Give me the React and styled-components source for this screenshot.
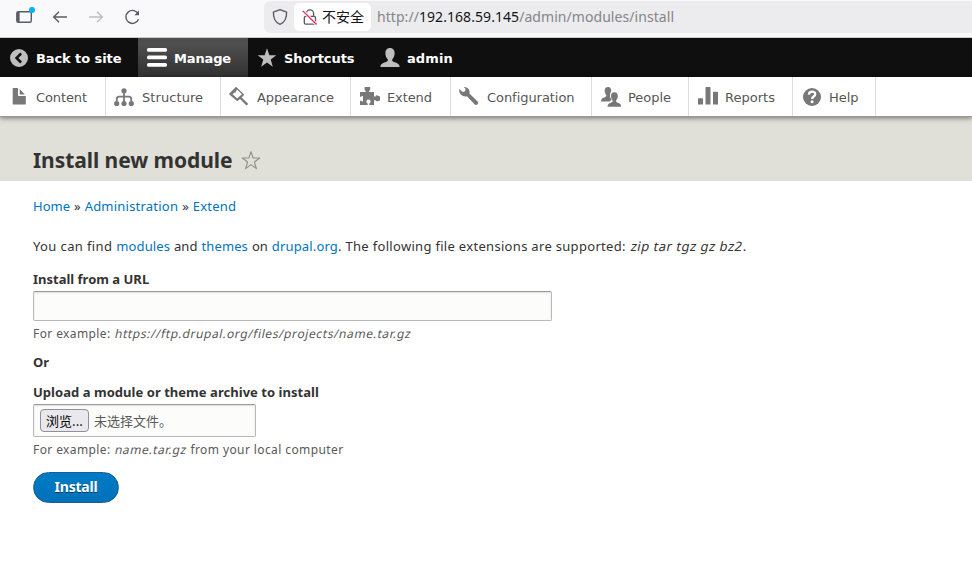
import React from 'react';
import styled, { createGlobalStyle, css } from 'styled-components';

const GlobalStyle = createGlobalStyle`
  * {
    box-sizing: border-box;
  }

  body {
    margin: 0;
    background: #fff;
    color: #333;
    font: 13px/20px 'Noto Sans', 'Open Sans', sans-serif;
  }

  svg {
    display: block;
    flex: none;
  }
`;

const tracking = css`
  letter-spacing: ${props => props.$tracking || 0}px;
`;

const BrowserBar = styled.div`
  height: 38px;
  display: flex;
  align-items: flex-start;
  background: #f9f9fb;
  border-bottom: 1px solid #ccccce;
`;

const BrowserButtons = styled.div`
  width: 264px;
  padding: 7px 0 0 15px;
  display: flex;
  gap: 16px;
`;

const AddressBar = styled.div`
  flex: 1;
  height: 32px;
  margin-top: 1px;
  padding-left: 6px;
  display: flex;
  align-items: center;
  background: #ececee;
  border-radius: 6px 0 0 6px;
`;

const SecurityChip = styled.div`
  width: 77px;
  height: 28px;
  margin: 0 6px 0 4px;
  padding: 0 0 2px 7px;
  display: flex;
  align-items: center;
  gap: 3px;
  background: #fff;
  border-radius: 5px;
  color: #15141a;
  font: 14px/26px 'Noto Sans CJK SC', sans-serif;
  white-space: nowrap;

  & > svg {
    margin-top: 2px;
  }
`;

const Url = styled.div`
  color: #85858a;
  font: 14px/28px 'Noto Sans', sans-serif;
  letter-spacing: 0.06px;

  & > b {
    color: #15141a;
    font-weight: 400;
  }
`;

const Toolbar = styled.nav`
  height: 39px;
  display: flex;
  background: #0f0f0f;
`;

const ToolbarTab = styled.a`
  width: ${props => props.$width}px;
  padding-left: 9px;
  display: flex;
  gap: 7px;
  color: #fff;
  font: 700 13px/42px 'DejaVu Sans', sans-serif;
  white-space: nowrap;
  background: ${props =>
    props.$active ? 'linear-gradient(#4e4e4e 20%, #303030)' : 'none'};
  ${tracking}

  & > svg {
    margin-top: 10px;
    fill: ${props => (props.$active ? '#fff' : '#bebebe')};
  }
`;

const Tray = styled.nav`
  height: 39px;
  display: flex;
  position: relative;
  background: #fff;
  box-shadow: 0 1px 0 #999b96, 0 2px 5px rgba(0, 0, 0, 0.5);
`;

const TrayLink = styled.a`
  width: ${props => props.$width}px;
  padding-left: ${props => props.$inset || 8}px;
  display: flex;
  gap: ${props => (props.$inset ? 7 : 8)}px;
  border-right: 1px solid #ddd;
  color: #565656;
  font: 13px/42px 'DejaVu Sans', sans-serif;
  white-space: nowrap;
  ${tracking}

  & > svg {
    margin-top: 10px;
    fill: #787878;
  }
`;

const PageHeader = styled.header`
  height: 65px;
  padding: 30px 0 0 33px;
  display: flex;
  gap: 9px;
  background: #e0e0d8;

  & > svg {
    margin-top: 4px;
  }
`;

const Title = styled.h1`
  margin: 0;
  font-size: 21px;
  line-height: 28px;
  letter-spacing: -0.06px;
`;

const Content = styled.main`
  padding: 15px 33px 0;
  white-space: nowrap;
`;

const Breadcrumb = styled.nav`
  display: flex;
  gap: 4px;
  margin-bottom: 20px;
`;

const Link = styled.a`
  color: #0074bd;
  ${tracking}
`;

const Span = styled.span`
  ${tracking}
`;

/* Slanted roman instead of the narrower true italic */
const Em = styled.em`
  display: inline-block;
  margin-left: 1px;
  font-style: normal;
  transform: skewX(-12deg);
  ${tracking}
`;

const Intro = styled.p`
  margin: 0 0 13px;
  display: flex;
  gap: 4px;
`;

const Label = styled.label`
  display: block;
  margin-bottom: 2px;
  font-weight: 700;
  ${tracking}
`;

const field = css`
  border: 1px solid #b8b8b8;
  border-top-color: #999;
  border-radius: 2px;
  background: #fcfcfa;
  box-shadow: inset 0 1px 2px rgba(0, 0, 0, 0.125);
`;

const TextInput = styled.input`
  ${field}
  display: block;
  width: 519px;
  height: 30px;
`;

const FileField = styled.div`
  ${field}
  width: 223px;
  height: 33px;
  padding-left: 6px;
  display: flex;
  align-items: center;
  gap: 5px;
  color: #595959;
  font: 13px/20px 'Noto Sans CJK SC', sans-serif;
`;

const BrowseButton = styled.button`
  width: 49px;
  height: 23px;
  padding: 0;
  border: 1px solid #8f8f9d;
  border-radius: 4px;
  background: #e9e9ed;
  color: #000;
  font: 13px/20px 'Noto Sans CJK SC', sans-serif;
`;

const Description = styled.div`
  margin: 3px 0 ${props => props.$gap}px;
  color: #595959;
  font-size: 12px;
  letter-spacing: 0.4px;
`;

const Or = styled.div`
  margin-bottom: 10px;
  font-weight: 700;
`;

const SubmitButton = styled.button`
  display: block;
  width: 86px;
  height: 31px;
  padding: 0 0 1px;
  border: 1px solid #1e5c90;
  border-radius: 16px;
  background: linear-gradient(#007bc6, #0071b8);
  color: #fff;
  font: 700 14px/20px 'Noto Sans', sans-serif;
  letter-spacing: -0.2px;
  text-shadow: 0 1px rgba(0, 0, 0, 0.5);
`;

const Icon = ({ children, size = 20, ...rest }) => (
  <svg width={size} height={size} viewBox="0 0 20 20" {...rest}>
    {children}
  </svg>
);

const icons = {
  back: (
    <path
      fillRule="evenodd"
      d="M10 1a9 9 0 1 0 0 18a9 9 0 0 0 0-18zM11.2 4.6L13 6.4L9.3 10L13 13.6L11.2 15.4L5.8 10z"
    />
  ),
  menu: (
    <path d="M1.6 0h16.8a1.6 1.6 0 0 1 1.6 1.6v.6a1.6 1.6 0 0 1-1.6 1.6H1.6A1.6 1.6 0 0 1 0 2.2v-.6A1.6 1.6 0 0 1 1.6 0zM1.6 7.5h16.8A1.6 1.6 0 0 1 20 9.1v.6a1.6 1.6 0 0 1-1.6 1.6H1.6A1.6 1.6 0 0 1 0 9.7v-.6a1.6 1.6 0 0 1 1.6-1.6zM1.6 15h16.8a1.6 1.6 0 0 1 1.6 1.6v.6a1.6 1.6 0 0 1-1.6 1.6H1.6A1.6 1.6 0 0 1 0 17.2v-.6A1.6 1.6 0 0 1 1.6 15z" />
  ),
  star: (
    <path d="M10 .2L12.4 7.2H19.3L13.7 11.4L15.8 18.8L10 14.5L4.2 18.8L6.3 11.4L.7 7.2H7.6z" />
  ),
  user: (
    <path d="M10 0C7 0 5.4 2.2 5.4 5.2C5.4 7.8 6.3 9.8 7.7 11.2C8.3 12.8 7.3 13.6 5.4 14.2C2.3 15.2.4 16 .4 19H19.6C19.6 16 17.7 15.2 14.6 14.2C12.7 13.6 11.7 12.8 12.3 11.2C13.7 9.8 14.6 7.8 14.6 5.2C14.6 2.2 13 0 10 0z" />
  ),
  content: (
    <path d="M16.5 9H9.8a.9.9 0 0 1-.8-.8V1.5a.5.5 0 0 0-.5-.5H4.3a.6.6 0 0 0-.6.6V17a.6.6 0 0 0 .6.6h11.9a.6.6 0 0 0 .6-.6V9.3zM10.7 7.4h5.2L10.7 2z" />
  ),
  structure: (
    <>
      <path
        d="M10 3v13M2.8 16v-4.2a2.2 2.2 0 0 1 2.2-2.2h10a2.2 2.2 0 0 1 2.2 2.2V16"
        fill="none"
        stroke="#787878"
        strokeWidth="1.8"
      />
      <circle cx="10" cy="3.8" r="2.6" />
      <circle cx="2.7" cy="16.5" r="2.6" />
      <circle cx="10" cy="16.5" r="2.6" />
      <circle cx="17.3" cy="16.5" r="2.6" />
    </>
  ),
  appearance: (
    <path
      fillRule="evenodd"
      d="M.3 6.4L6.4.4C6.8 0 7.4 0 7.8.4L14.6 7C15 7.4 15 8 14.6 8.4L12.6 10.4L18.7 16.3C19.6 17.3 18 19 17 18.1L11 12L8.9 13.7C8.4 14.1 7.9 14.1 7.4 13.6L.3 7.6C0 7.2 0 6.8 .3 6.4zM8.4 2.8L6.7 4.3L6.9 5.8L5.4 5.5L3.6 7.3L8.2 11.6L12.9 7.3z"
    />
  ),
  extend: (
    <path d="M0 5H5.7V3.8C4.8 3.5 4.4 2.8 4.6 1.8V0H10.2V1.8C10.4 2.8 10 3.5 9.1 3.8V5H14V9.4H15.5C15.8 8.5 16.4 8.2 17.3 8.4L20 9.4V13.4L17.3 14.3C16.4 14.5 15.8 14.1 15.5 13.3H14V18H9.3V16.6C10.5 16 10.9 14.9 10.4 13.8C9.7 12.2 7.3 12.2 6.6 13.8C6.1 14.9 6.5 16 7.7 16.6V18H0V13.7H1.2C1.6 14.5 2.4 14.7 3 14.3V9.2C2.4 8.9 1.6 9.1 1.2 9.8H0z" />
  ),
  configuration: (
    <path d="M.4 2.1L3.6 4.9L6.2 4.3L6.5 1.8L4.8 0C8.5-.2 11.4 2.7 10.4 6.5L18.6 14.4C20.2 16.2 17.7 19.1 15.8 17.5L7.9 9.2C3.4 10.3-.7 6.4.4 2.1z" />
  ),
  people: (
    <>
      <path d="M7 0C4.8 0 3.7 1.6 3.7 3.7C3.7 5.5 4.2 6.8 5.2 7.8C5.5 9.4 4.8 10 3.3 10.5C1.2 11.3 0 12 0 14.4H8.8C9.2 13.9 9.9 13.5 10.9 13.1C9.6 11.9 9 10.5 9 8.8C9 6.8 9.4 5.4 10.2 4.5C10.4 1.8 9.4 0 7 0z" />
      <path d="M13.4 5.2C11.1 5.2 10 6.8 10 9C10 10.8 10.6 12.2 11.6 13.2C11.9 14.6 11.2 15.2 9.8 15.7C7.8 16.4 6.5 17.2 6.5 19.7H20.1C20.1 17.2 18.9 16.4 16.9 15.7C15.4 15.2 14.8 14.6 15.2 13.2C16.2 12.2 16.8 10.8 16.8 9C16.8 6.8 15.7 5.2 13.4 5.2z" />
    </>
  ),
  reports: (
    <path d="M.6 11.2H4.4a.6.6 0 0 1 .6.6V17.6H0V11.8a.6.6 0 0 1 .6-.6zM8.1 0h3.8a.6.6 0 0 1 .6.6v17H7.5V.6a.6.6 0 0 1 .6-.6zM15.6 4.7h3.8a.6.6 0 0 1 .6.6v12.3H15V5.3a.6.6 0 0 1 .6-.6z" />
  ),
  help: (
    <>
      <circle cx="10" cy="10" r="9" />
      <path
        d="M6.9 7.6C7 5.6 8.3 4.7 10.1 4.7C12 4.7 13.2 5.7 13.2 7.3C13.2 9.6 10.1 9.5 10.1 12"
        fill="none"
        stroke="#fff"
        strokeWidth="2.3"
      />
      <circle cx="10.1" cy="14.8" r="1.5" fill="#fff" />
    </>
  ),
};

const toolbarTabs = [
  { icon: 'back', label: 'Back to site', width: 138, tracking: -0.09 },
  { icon: 'menu', label: 'Manage', width: 110, tracking: -0.15, active: true },
  { icon: 'star', label: 'Shortcuts', width: 123, tracking: -0.07 },
  { icon: 'user', label: 'admin', width: 110, tracking: 0.1 },
];

const trayLinks = [
  { icon: 'content', label: 'Content', width: 106, tracking: -0.1, inset: 9 },
  { icon: 'structure', label: 'Structure', width: 115, tracking: 0.08 },
  { icon: 'appearance', label: 'Appearance', width: 130, tracking: -0.12 },
  { icon: 'extend', label: 'Extend', width: 100, tracking: -0.1, inset: 9 },
  { icon: 'configuration', label: 'Configuration', width: 141, tracking: -0.05 },
  { icon: 'people', label: 'People', width: 97, tracking: -0.04, inset: 9 },
  { icon: 'reports', label: 'Reports', width: 104, tracking: 0.02, inset: 9 },
  { icon: 'help', label: 'Help', width: 83, tracking: -0.05, inset: 9 },
];

const Browser = () => (
  <BrowserBar>
    <BrowserButtons>
      <Icon fill="none" stroke="#5b5b66" strokeWidth="1.4">
        <rect x="1.8" y="4.7" width="14.5" height="10.6" rx="1.5" />
        <path d="M3.3 5v10" strokeWidth="2.6" />
        <circle cx="17" cy="3" r="3" fill="#00b3f4" stroke="none" />
      </Icon>
      <Icon fill="none" stroke="#5b5b66" strokeWidth="1.4">
        <path d="M16 10H2.8M8 4.7L2.7 10L8 15.3" />
      </Icon>
      <Icon fill="none" stroke="#bdbdc2" strokeWidth="1.4">
        <path d="M2 10H15.2M10 4.7L15.3 10L10 15.3" />
      </Icon>
      <Icon fill="none" stroke="#5b5b66" strokeWidth="1.4">
        <path d="M15.4 7.4A6.5 6.5 0 1 0 15.5 12.2" />
        <path d="M16 3.6V8.2H11.4z" fill="#5b5b66" stroke="none" />
      </Icon>
    </BrowserButtons>
    <AddressBar>
      <Icon fill="none" stroke="#5b5b66" strokeWidth="1.4">
        <path d="M10 2.7L16.6 5.1C16.8 10.5 14.7 15.3 10 17.4C5.3 15.3 3.2 10.5 3.4 5.1z" strokeLinejoin="round" />
      </Icon>
      <SecurityChip>
        <Icon size={18} fill="none" stroke="#5b5b66" strokeWidth="1.5">
          <rect x="3.7" y="9.3" width="12.4" height="8.6" rx="1.5" />
          <path d="M6 9V6a4 4 0 0 1 8 0v3" />
          <path d="M2 3.2L17.3 18.3" stroke="#fff" strokeWidth="3.4" />
          <path d="M2 3.2L17.3 18.3" stroke="#e22850" />
        </Icon>
        不安全
      </SecurityChip>
      <Url>
        http://<b>192.168.59.145</b>/admin/modules/install
      </Url>
    </AddressBar>
  </BrowserBar>
);

const App = () => (
  <>
    <GlobalStyle />
    <Browser />
    <Toolbar>
      {toolbarTabs.map(tab => (
        <ToolbarTab
          key={tab.label}
          $width={tab.width}
          $tracking={tab.tracking}
          $active={tab.active}
        >
          <Icon>{icons[tab.icon]}</Icon>
          {tab.label}
        </ToolbarTab>
      ))}
    </Toolbar>
    <Tray>
      {trayLinks.map(link => (
        <TrayLink
          key={link.label}
          $width={link.width}
          $tracking={link.tracking}
          $inset={link.inset}
        >
          <Icon>{icons[link.icon]}</Icon>
          {link.label}
        </TrayLink>
      ))}
    </Tray>
    <PageHeader>
      <Title>Install new module</Title>
      <Icon fill="none" stroke="#8f8f84" strokeWidth="1.1" strokeLinejoin="round">
        <path d="M10 1.6L12.1 8H18.7L13.4 12L15.4 18.6L10 14.6L4.6 18.6L6.6 12L1.3 8H7.9z" />
      </Icon>
    </PageHeader>
    <Content>
      <Breadcrumb>
        <Link>Home</Link>
        <span>»</span>
        <Link $tracking={0.22}>Administration</Link>
        <span>»</span>
        <Link $tracking={0.22}>Extend</Link>
      </Breadcrumb>
      <Intro>
        <Span $tracking={0.38}>You can find</Span>
        <Link $tracking={0.09}>modules</Link>
        <Span $tracking={0.1}>and</Span>
        <Link $tracking={0.1}>themes</Link>
        <span>on</span>
        <span>
          <Link $tracking={0.15}>drupal.org</Link>.
        </span>
        <Span $tracking={0.31}>The following file extensions are supported:</Span>
        <span>
          <Em $tracking={0.51}>zip tar tgz gz bz2</Em>.
        </span>
      </Intro>
      <Label>Install from a URL</Label>
      <TextInput type="text" />
      <Description $gap={8}>
        For example:{' '}
        <Em $tracking={0.6}>https://ftp.drupal.org/files/projects/name.tar.gz</Em>
      </Description>
      <Or>Or</Or>
      <Label $tracking={0.04}>Upload a module or theme archive to install</Label>
      <FileField>
        <BrowseButton>浏览...</BrowseButton>
        未选择文件。
      </FileField>
      <Description $gap={12}>
        For example: <Em $tracking={0.55}>name.tar.gz</Em> from your local computer
      </Description>
      <SubmitButton>Install</SubmitButton>
    </Content>
  </>
);

export default App;
